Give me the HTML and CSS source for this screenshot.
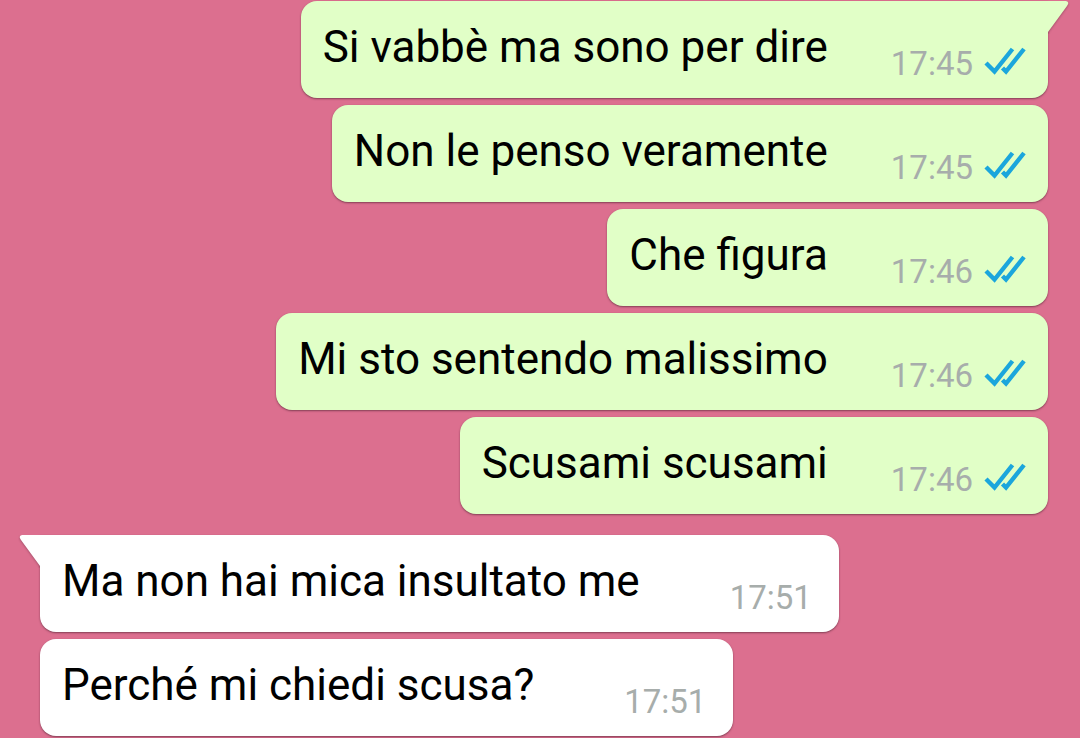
FILE: index.html
```html
<!DOCTYPE html>
<html lang="it">
<head>
<meta charset="utf-8">
<meta name="viewport" content="width=device-width, initial-scale=1">
<title>Chat</title>
<link rel="stylesheet" href="styles.css">
</head>
<body>
<svg class="defs" aria-hidden="true">
  <symbol id="ticks" viewBox="0 0 42 28">
    <path d="M2 16 10.500 24.500 28.500 2M18.500 21 22 24.500 40 2" fill="none" stroke="currentColor" stroke-width="4.400"/>
  </symbol>
</svg>
<main class="chat">
  <section class="group group-out">
    <article class="bubble">
      <svg class="tail" viewBox="0 0 22 33" aria-hidden="true"><path d="M0 0H19Q23 1 20 5L1 31V33H0Z"/></svg>
      <p class="text">Si vabbè ma sono per dire</p>
      <div class="meta"><time>17:45</time><svg class="ticks" role="img" aria-label="Letto"><use href="#ticks"/></svg></div>
    </article>
    <article class="bubble">
      <p class="text">Non le penso veramente</p>
      <div class="meta"><time>17:45</time><svg class="ticks" role="img" aria-label="Letto"><use href="#ticks"/></svg></div>
    </article>
    <article class="bubble">
      <p class="text">Che figura</p>
      <div class="meta"><time>17:46</time><svg class="ticks" role="img" aria-label="Letto"><use href="#ticks"/></svg></div>
    </article>
    <article class="bubble">
      <p class="text">Mi sto sentendo malissimo</p>
      <div class="meta"><time>17:46</time><svg class="ticks" role="img" aria-label="Letto"><use href="#ticks"/></svg></div>
    </article>
    <article class="bubble">
      <p class="text">Scusami scusami</p>
      <div class="meta"><time>17:46</time><svg class="ticks" role="img" aria-label="Letto"><use href="#ticks"/></svg></div>
    </article>
  </section>
  <section class="group group-in">
    <article class="bubble">
      <svg class="tail" viewBox="0 0 22 33" aria-hidden="true"><path d="M22 0H3Q-1 1 2 5L21 31V33H22Z"/></svg>
      <p class="text">Ma non hai mica insultato me</p>
      <div class="meta"><time>17:51</time></div>
    </article>
    <article class="bubble">
      <p class="text">Perché mi chiedi scusa?</p>
      <div class="meta"><time>17:51</time></div>
    </article>
  </section>
</main>
</body>
</html>
```
FILE: styles.css
```css
* {
  box-sizing: border-box;
}

body {
  margin: 0;
  background: #dc6f8f;
  color: #000;
  font-family: Roboto, "Liberation Sans", sans-serif;
}

.defs {
  position: absolute;
  width: 0;
  height: 0;
}

.chat {
  display: flex;
  flex-direction: column;
  gap: 21px;
  padding: 1px 32px 2px 40px;
}

.group {
  display: flex;
  flex-direction: column;
  gap: 7px;
}

.group-out {
  --bubble: #e1ffc7;
  align-items: flex-end;
}

.group-in {
  --bubble: #fff;
  align-items: flex-start;
}

.bubble {
  position: relative;
  display: flex;
  align-items: flex-end;
  gap: 63px;
  padding: 20px 22px 17px;
  border-radius: 16px;
  background: var(--bubble);
  box-shadow: 0 1px 2px rgba(70, 30, 45, 0.6);
}

.group-in .bubble {
  gap: 90px;
  padding-right: 27px;
}

.group-out .bubble:first-child {
  border-top-right-radius: 0;
}

.group-in .bubble:first-child {
  border-top-left-radius: 0;
}

.text {
  margin: 0;
  padding-bottom: 8px;
  font-size: 44px;
  line-height: 52px;
}

.meta {
  display: flex;
  align-items: center;
  gap: 11px;
  color: #a7adab;
  font-size: 33px;
  line-height: 34px;
}

.ticks {
  width: 42px;
  height: 28px;
  margin-bottom: 6px;
  color: #1ba6dc;
}

.tail {
  position: absolute;
  top: 0;
  width: 22px;
  height: 33px;
  fill: var(--bubble);
  filter: drop-shadow(0 1px 1px rgba(70, 30, 45, 0.4));
  clip-path: inset(0 -3px 0 0);
}

.group-out .tail {
  left: calc(100% - 1px);
}

.group-in .tail {
  right: calc(100% - 1px);
  clip-path: inset(0 0 0 -3px);
}
```
